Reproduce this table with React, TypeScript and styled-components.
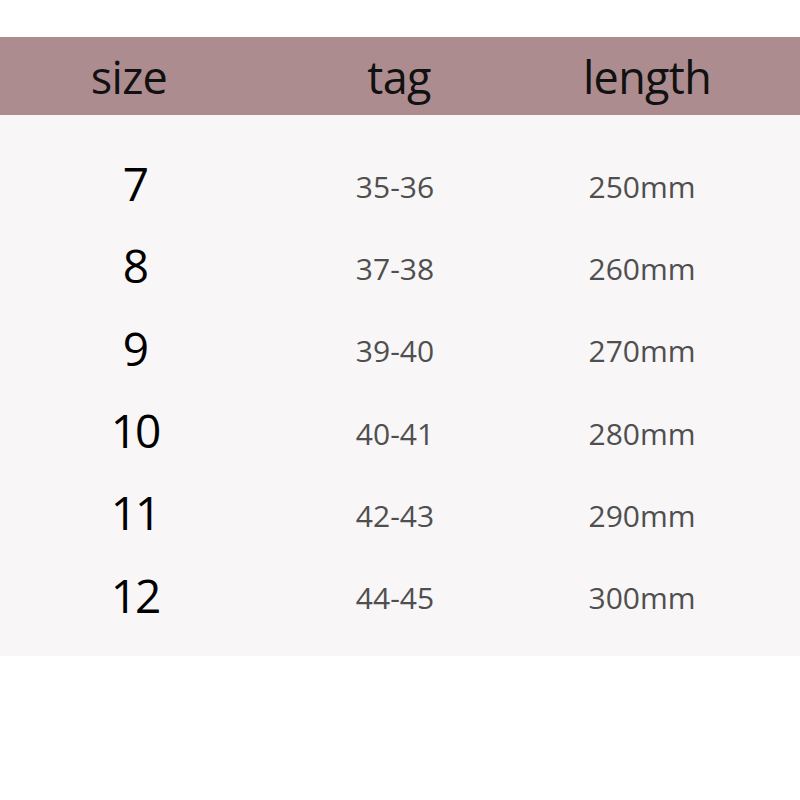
import React from "react";
import styled, { createGlobalStyle } from "styled-components";

const GlobalStyle = createGlobalStyle`
  html, body {
    margin: 0;
    padding: 0;
    background: #ffffff;
  }
  body {
    font-family: "Open Sans", "Noto Sans", sans-serif;
  }
`;

const Page = styled.div`
  width: 800px;
  height: 800px;
  padding-top: 37px;
  box-sizing: border-box;
  background: #ffffff;
`;

const COLS = "272px 246px 248px 34px";

const HeaderBar = styled.div`
  display: grid;
  grid-template-columns: ${COLS};
  height: 78px;
  background: #ad8c90;
`;

const HeaderCell = styled.div<{ $offset?: number }>`
  display: flex;
  justify-content: center;
  align-items: center;
  height: 78px;
  line-height: 78px;
  padding-top: 2px;
  box-sizing: border-box;
  font-family: "Open Sans", sans-serif;
  font-size: 45px;
  letter-spacing: -0.7px;
  font-weight: 400;
  color: #111111;
  padding-left: ${(p) => Math.max(0, (p.$offset ?? 0) * 2)}px;
  padding-right: ${(p) => Math.max(0, -(p.$offset ?? 0) * 2)}px;
`;

const Body = styled.div`
  display: grid;
  grid-template-columns: ${COLS};
  grid-auto-rows: 82.3px;
  padding: 30.5px 0 16.5px;
  background: #f8f6f7;
`;

const SizeCell = styled.div`
  display: flex;
  justify-content: center;
  align-items: center;
  padding-bottom: 7px;
  padding-right: 2px;
  font-family: "Open Sans", sans-serif;
  font-size: 46px;
  letter-spacing: -2px;
  line-height: 1;
  color: #000000;
`;

const ValueCell = styled.div`
  display: flex;
  justify-content: center;
  align-items: center;
  font-family: "Open Sans", sans-serif;
  font-size: 30px;
  line-height: 1;
  color: #4f4f4f;
`;

const Spacer = styled.div``;

const rows = [
  { size: "7", tag: "35-36", length: "250mm" },
  { size: "8", tag: "37-38", length: "260mm" },
  { size: "9", tag: "39-40", length: "270mm" },
  { size: "10", tag: "40-41", length: "280mm" },
  { size: "11", tag: "42-43", length: "290mm" },
  { size: "12", tag: "44-45", length: "300mm" },
];

export default function App() {
  return (
    <>
      <GlobalStyle />
      <Page>
        <HeaderBar>
          <HeaderCell $offset={-7}>size</HeaderCell>
          <HeaderCell $offset={4}>tag</HeaderCell>
          <HeaderCell $offset={5}>length</HeaderCell>
          <Spacer />
        </HeaderBar>
        <Body>
          {rows.map((r) => (
            <React.Fragment key={r.size}>
              <SizeCell>{r.size}</SizeCell>
              <ValueCell>{r.tag}</ValueCell>
              <ValueCell>{r.length}</ValueCell>
              <Spacer />
            </React.Fragment>
          ))}
        </Body>
      </Page>
    </>
  );
}
